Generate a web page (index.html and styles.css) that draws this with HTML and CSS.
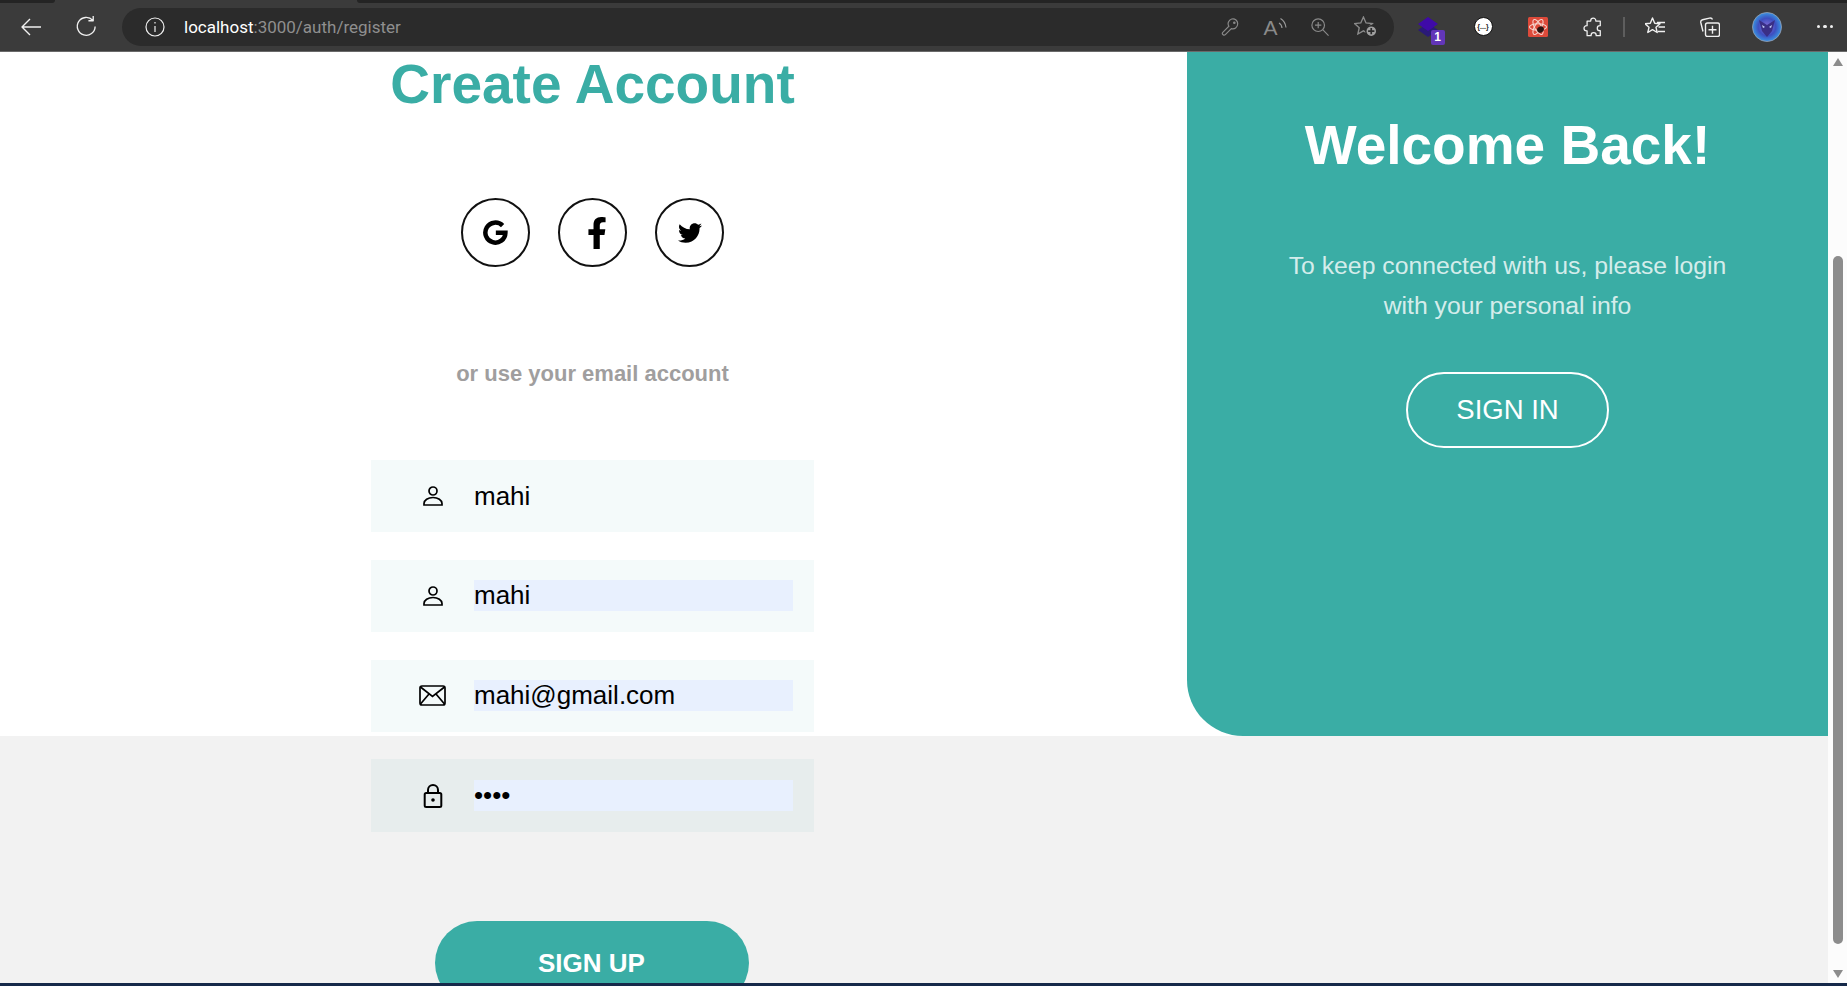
FILE: index.html
```html
<!DOCTYPE html>
<html lang="en">

<head>
  <meta charset="UTF-8">
  <meta name="viewport" content="width=device-width, initial-scale=1.0">
  <title>Register</title>
  <link rel="stylesheet" href="styles.css">
</head>

<body>
  <div class="tab-strip">
    <span class="strip-dark strip-first"></span>
    <span class="strip-tab"></span>
    <span class="strip-dark strip-rest"></span>
  </div>

  <header class="toolbar">
    <svg class="nav-icon nav-back" viewBox="0 0 24 24"><path d="M22 12H3M11 4l-8 8 8 8" /></svg>
    <svg class="nav-icon nav-reload" viewBox="0 0 24 24"><path d="M18.5 5.5A9.3 9.3 0 1 0 21 12M19 1v5h-5" /></svg>

    <div class="address">
      <svg class="info-icon" viewBox="0 0 20 20"><circle cx="10" cy="10" r="9" /><path d="M10 9v6M10 5v1.6" /></svg>
      <span class="url"><span class="url-host">localhost</span>:3000/auth/register</span>
      <div class="address-tools">
        <span class="addr-slot">
          <svg class="addr-icon" viewBox="0 0 20 20">
            <path d="M18.500 6.800a5.300 5.300 0 0 1-7 5L4.800 18.500c-.8.8-1.600.8-2.400.2l-.4-.4c-.7-.7-.7-1.600 0-2.400l6.800-6.700a5.300 5.300 0 1 1 9.700-2.400z" />
            <circle cx="14.800" cy="5.300" r=".8" />
          </svg>
        </span>
        <span class="addr-slot read-aloud">A<svg viewBox="0 0 9 14"><path d="M1 6c1.800 1 2.800 2.500 3 5M2.500 1.500c3 1.800 5 5 5.500 9" /></svg></span>
        <span class="addr-slot">
          <svg class="addr-icon addr-zoom" viewBox="0 0 20 20"><circle cx="8" cy="8" r="7" /><path d="M13 13l6.500 6.500M4.500 8h7M8 4.500v7" /></svg>
        </span>
        <span class="addr-slot">
          <svg class="addr-icon addr-fav" viewBox="0 0 22 20">
            <path d="M9 1l2.500 5.600 6 .6-4.500 4 1.300 6L9 14.200l-5.300 3 1.300-6-4.500-4 6-.6z" />
            <circle class="fav-dot" cx="16.500" cy="14.500" r="5.200" />
            <path class="fav-plus" d="M16.500 11.500v6M13.500 14.500h6" />
          </svg>
        </span>
      </div>
    </div>

    <div class="extensions">
      <div class="ext-slot">
        <svg viewBox="0 0 20 20" class="ext-diamond">
          <path fill="#2a1a78" d="M10 6l10 7-10 7-10-7z" />
          <path fill="#3f0aa8" d="M10 0l10 7-10 7-10-7z" />
        </svg>
        <span class="ext-badge">1</span>
      </div>
      <div class="ext-slot"><span class="ext-json">{...}</span></div>
      <div class="ext-slot">
        <svg class="ext-react" viewBox="0 0 20 20">
          <rect width="20" height="20" rx="1.500" fill="#dd4a3a" />
          <g fill="none" stroke="#f7d6d0" stroke-width="1.100">
            <ellipse cx="10" cy="10" rx="8.500" ry="3.300" />
            <ellipse cx="10" cy="10" rx="8.500" ry="3.300" transform="rotate(60 10 10)" />
            <ellipse cx="10" cy="10" rx="8.500" ry="3.300" transform="rotate(120 10 10)" />
          </g>
          <ellipse cx="12.500" cy="12.500" rx="3.500" ry="3" fill="#2b1512" transform="rotate(-35 12.500 12.500)" />
        </svg>
      </div>
      <div class="ext-slot">
        <svg class="nav-icon tool-puzzle" viewBox="0 0 21 22"><path d="M8 4.500V4a2.800 2.800 0 0 1 5.600 0v.5H18.500V9.500H18a2.800 2.800 0 0 0 0 5.600h.5v5.400h-4.500V20a2.800 2.800 0 0 0-5.600 0v.5H4V15.300H3.500a2.900 2.900 0 0 1 0-5.800H4V4.500z" /></svg>
      </div>
    </div>

    <span class="tool-divider"></span>

    <div class="tools">
      <span class="tool-slot">
        <svg class="nav-icon" viewBox="0 0 20 20"><path d="M7.500 1l2.200 5.200 5.300.5-4 3.600 1.200 5.200-4.700-2.800-4.700 2.800 1.200-5.200-4-3.600 5.300-.5zM12 5.500h8M13.500 10H20M13 14.500h7" /></svg>
      </span>
      <span class="tool-slot">
        <svg class="nav-icon" viewBox="0 0 20 20"><path d="M3 14.500L.8 5.500C.5 4 1 3.200 2.500 2.800l7-1.700c1.500-.3 2.500.2 3 1.500M7.500 6h10a2 2 0 0 1 2 2v9.500a2 2 0 0 1-2 2h-10a2 2 0 0 1-2-2V8a2 2 0 0 1 2-2zM12.500 8.800v8M8.500 12.800h8" /></svg>
      </span>
      <span class="tool-slot tool-slot-avatar">
        <svg class="tool-avatar" viewBox="0 0 30 30">
          <defs>
            <radialGradient id="avatarFill" cx="50%" cy="50%" r="55%">
              <stop offset="0" stop-color="#8a6ed8" />
              <stop offset=".55" stop-color="#3d4fc0" />
              <stop offset="1" stop-color="#38a4ea" />
            </radialGradient>
          </defs>
          <circle cx="15" cy="15" r="14.500" fill="url(#avatarFill)" stroke="#9aa0b0" stroke-width=".8" />
          <path d="M7 8l8 5 8-5-3 11-5 6-5-6z" fill="#3a2f86" />
          <path d="M10 13l3 2-2 1zM20 13l-3 2 2 1z" fill="#c9d6fa" />
        </svg>
      </span>
      <span class="tool-slot tool-slot-dots"><span class="tool-dots"><i></i><i></i><i></i></span></span>
    </div>
  </header>

  <main class="viewport">
    <div class="page">
      <div class="card">
        <section class="signup">
          <h1 class="signup-title">Create Account</h1>

          <div class="social">
            <a class="social-btn">
              <svg class="icon-google" viewBox="0 0 24 24"><path d="M18.300 5.900A8.900 8.900 0 1 0 20.800 12.300H12.300" /></svg>
            </a>
            <a class="social-btn">
              <svg class="icon-facebook" viewBox="0 0 320 512"><path d="M279.140 288l14.220-92.660h-88.910v-60.130c0-25.350 12.420-50.060 52.240-50.060h40.420V6.260S260.430 0 225.360 0c-73.220 0-121.080 44.380-121.080 124.720v70.620H22.890V288h81.390v224h100.170V288z" /></svg>
            </a>
            <a class="social-btn">
              <svg class="icon-twitter" viewBox="0 0 512 512"><path d="M459.370 151.716c.325 4.548.325 9.097.325 13.645 0 138.720-105.583 298.558-298.558 298.558-59.452 0-114.680-17.219-161.137-47.106 8.447.974 16.568 1.299 25.340 1.299 49.055 0 94.213-16.568 130.274-44.832-46.132-.975-84.792-31.188-98.112-72.772 6.498.974 12.995 1.624 19.818 1.624 9.421 0 18.843-1.300 27.614-3.573-48.081-9.747-84.143-51.980-84.143-102.985v-1.299c13.969 7.797 30.214 12.670 47.431 13.319-28.264-18.843-46.781-51.005-46.781-87.391 0-19.492 5.197-37.360 14.294-52.954 51.655 63.675 129.300 105.258 216.365 109.807-1.624-7.797-2.599-15.918-2.599-24.040 0-57.828 46.782-104.934 104.934-104.934 30.213 0 57.502 12.670 76.670 33.137 23.715-4.548 46.456-13.645 66.599-25.340-7.798 24.366-24.366 44.833-46.132 57.827 21.117-2.273 41.584-8.122 60.426-16.243-14.292 20.791-32.161 39.308-52.628 54.253z" /></svg>
            </a>
          </div>

          <p class="signup-hint">or use your email account</p>

          <form class="signup-form">
            <label class="field">
              <svg class="field-icon" viewBox="0 0 20 20"><circle cx="10" cy="5" r="4" /><path d="M1 19v-1.500C1 14 5 11.500 10 11.500s9 2.500 9 6V19z" /></svg>
              <input class="field-input" type="text" value="mahi">
            </label>
            <label class="field">
              <svg class="field-icon" viewBox="0 0 20 20"><circle cx="10" cy="5" r="4" /><path d="M1 19v-1.500C1 14 5 11.500 10 11.500s9 2.500 9 6V19z" /></svg>
              <input class="field-input is-filled" type="text" value="mahi">
            </label>
            <label class="field">
              <svg class="field-icon icon-mail" viewBox="0 0 27 21"><rect x="1" y="1" width="25" height="19" rx="2" /><path d="M1.500 2l12 9.500 12-9.500M1.500 19l8.500-10M25.500 19L17 9" /></svg>
              <input class="field-input is-filled" type="email" value="mahi@gmail.com">
            </label>
            <label class="field field-last">
              <svg class="field-icon icon-lock" viewBox="0 0 19 24"><rect x="1.200" y="9" width="16.600" height="14" rx="1.500" /><path d="M4.500 9V6a5 5 0 0 1 10 0v3" /><circle class="lock-dot" cx="9.500" cy="16" r="1.800" /></svg>
              <input class="field-input is-filled" type="password" value="mahi">
            </label>
            <button class="btn-signup" type="button">SIGN UP</button>
          </form>
        </section>

        <aside class="welcome">
          <h2 class="welcome-title">Welcome Back!</h2>
          <p class="welcome-text">To keep connected with us, please login with your personal info</p>
          <button class="btn-signin" type="button">SIGN IN</button>
        </aside>
      </div>
    </div>

    <div class="scrollbar">
      <span class="arrow-up"></span>
      <span class="thumb"></span>
      <span class="arrow-down"></span>
    </div>
  </main>

  <div class="taskbar-edge"></div>
</body>

</html>
```

FILE: styles.css
```css
* {
  box-sizing: border-box;
}

html,
body {
  height: 100%;
  margin: 0;
  overflow: hidden;
}

body {
  font-family: 'Liberation Sans', Arial, sans-serif;
  background-color: #f2f2f2;
  display: flex;
  flex-direction: column;
}

/* browser chrome */
.tab-strip {
  display: flex;
  height: 3px;
  background-color: #3b3b3b;
}

.strip-dark {
  background-color: #242424;
}

.strip-first {
  width: 55px;
  border-bottom-right-radius: 3px;
}

.strip-tab {
  width: 302px;
}

.strip-rest {
  flex: 1;
  border-bottom-left-radius: 3px;
}

.toolbar {
  display: flex;
  align-items: center;
  height: 49px;
  padding-bottom: 1px;
  background-color: #3b3b3b;
  border-bottom: 1px solid #6a6a6a;
}

.nav-icon {
  fill: none;
  stroke: #f0f0f0;
  stroke-width: 1.400;
  stroke-linejoin: round;
  width: 20px;
  height: 20px;
  flex: none;
}

.nav-back {
  width: 24px;
  height: 24px;
  margin-left: 19px;
}

.nav-reload {
  margin-left: 32px;
  width: 23px;
  height: 23px;
}

.address {
  display: flex;
  align-items: center;
  flex: none;
  width: 1272px;
  height: 38px;
  margin-left: 24px;
  padding: 0 6.500px 0 23px;
  border-radius: 19px;
  background-color: #2b2b2b;
}

.info-icon {
  width: 20px;
  height: 20px;
  fill: none;
  stroke: #f0f0f0;
  stroke-width: 1.200;
}

.url {
  margin-left: 19px;
  font-family: Roboto, sans-serif;
  font-size: 17px;
  color: #8f8f8f;
  flex: 1;
}

.url-host {
  color: #fff;
}

.address-tools {
  display: flex;
  align-items: center;
}

.addr-slot {
  display: flex;
  align-items: center;
  justify-content: center;
  width: 45px;
}

.addr-icon {
  width: 18px;
  height: 18px;
  fill: none;
  stroke: #8a8a8a;
  stroke-width: 1.300;
}

.addr-fav {
  width: 23px;
  height: 21px;
}

.fav-dot {
  fill: #a0a0a0;
  stroke: #2b2b2b;
}

.fav-plus {
  stroke: #2b2b2b;
  stroke-width: 1.600;
}

.read-aloud {
  align-items: flex-start;
  height: 20px;
  font-size: 21px;
  line-height: 22px;
  color: #8a8a8a;
}

.read-aloud svg {
  width: 9px;
  height: 14px;
  flex: none;
  fill: none;
  stroke: #9a9a9a;
  stroke-width: 1.200;
}

.extensions {
  display: flex;
  flex: none;
  margin-left: 6.500px;
}

.ext-slot {
  position: relative;
  display: flex;
  align-items: center;
  justify-content: center;
  width: 55px;
  height: 40px;
}

.ext-diamond {
  width: 20px;
  height: 20px;
}

.ext-badge {
  position: absolute;
  left: 30px;
  top: 23px;
  width: 14px;
  height: 15px;
  border-radius: 2px;
  background-color: #6236b8;
  color: #fff;
  font-size: 12px;
  font-weight: bold;
  line-height: 15px;
  text-align: center;
}

.ext-json {
  width: 19px;
  height: 19px;
  border-radius: 50%;
  background-color: #fff;
  border: 1px solid #111;
  color: #222;
  font-size: 7px;
  font-weight: bold;
  line-height: 17px;
  text-align: center;
}

.ext-react {
  width: 20px;
  height: 20px;
}

.tool-divider {
  width: 2px;
  height: 20px;
  margin-left: 2px;
  flex: none;
  background-color: #5e5e5e;
}

.tools {
  display: flex;
  align-items: center;
  margin-left: 3px;
}

.tool-slot {
  display: flex;
  align-items: center;
  justify-content: center;
  width: 55px;
}

.tool-slot-avatar {
  width: 59px;
}

.tool-slot-dots {
  width: 57px;
}

.tool-avatar {
  width: 30px;
  height: 30px;
}

.tool-dots {
  display: flex;
  gap: 3px;
}

.tool-dots i {
  width: 3.500px;
  height: 3.500px;
  border-radius: 50%;
  background-color: #f0f0f0;
}

/* page */
.viewport {
  flex: 1;
  display: flex;
  overflow: hidden;
  min-height: 0;
}

.page {
  flex: 1;
  min-width: 0;
}

.card {
  display: grid;
  grid-template-columns: 1187px 641px;
  grid-template-rows: 684px;
  background-color: #fff;
}

.signup {
  display: flex;
  flex-direction: column;
  align-items: center;
  padding-right: 2px;
}

.signup-title {
  margin: 0;
  font-size: 55px;
  line-height: 64px;
  color: #3aada5;
}

.social {
  display: flex;
  gap: 28px;
  margin: 82px 1px 0 0;
}

.social-btn {
  display: flex;
  align-items: center;
  justify-content: center;
  width: 69px;
  height: 69px;
  border: 2px solid #111;
  border-radius: 50%;
}

.icon-google {
  width: 27px;
  height: 27px;
  fill: none;
  stroke: #000;
  stroke-width: 4;
}

.icon-facebook {
  width: 20px;
  height: 32px;
  margin-left: 9px;
}

.icon-twitter {
  width: 24px;
  height: 24px;
  margin-left: 2px;
}

.signup-hint {
  margin: 94px 0 0;
  font-size: 22px;
  font-weight: bold;
  line-height: 26px;
  color: #a09e9e;
}

.signup-form {
  display: flex;
  flex-direction: column;
  align-items: center;
  gap: 27.8px;
  width: 443px;
  margin-top: 73px;
}

.field {
  display: flex;
  align-items: center;
  width: 100%;
  height: 72px;
  flex: none;
  padding-right: 21px;
  background-color: rgba(58, 173, 165, 0.055);
}

.field-last {
  height: 73px;
}

.field-icon {
  width: 20px;
  height: 20px;
  margin: 0 31.500px 0 51.500px;
  flex: none;
  fill: none;
  stroke: #000;
  stroke-width: 1.700;
}

.icon-mail {
  width: 27px;
  height: 21px;
  margin: 0 28px 0 48px;
}

.icon-lock {
  height: 24px;
  stroke-width: 2;
}

.lock-dot {
  fill: #000;
  stroke: none;
}

.field-input {
  flex: 1;
  min-width: 0;
  height: 31px;
  padding: 0;
  border: none;
  outline: none;
  background: transparent;
  color: #000;
  font-family: 'Liberation Sans', Arial, sans-serif;
  font-size: 26px;
}

.field-input.is-filled {
  background-color: #e8f0fe;
}

.btn-signup {
  flex: none;
  width: 314px;
  height: 84px;
  margin: 61px 2px 0 0;
  border: none;
  border-radius: 42px;
  background-color: #3aada5;
  color: #fff;
  font-family: 'Liberation Sans', Arial, sans-serif;
  font-size: 26px;
  font-weight: bold;
}

.welcome {
  display: flex;
  flex-direction: column;
  align-items: center;
  padding-top: 61px;
  border-bottom-left-radius: 56px;
  background-color: #3aada5;
  color: #fff;
  text-align: center;
}

.welcome-title {
  margin: 0;
  font-size: 55px;
  line-height: 64px;
}

.welcome-text {
  max-width: 470px;
  margin: 69px 0 0;
  font-size: 24.750px;
  line-height: 40px;
  color: rgba(255, 255, 255, 0.8);
}

.btn-signin {
  width: 203px;
  height: 76px;
  margin-top: 46px;
  border: 2px solid #fff;
  border-radius: 38px;
  background: transparent;
  color: #fff;
  font-family: 'Liberation Sans', Arial, sans-serif;
  font-size: 27.500px;
}

/* scrollbar */
.scrollbar {
  display: flex;
  flex-direction: column;
  align-items: center;
  flex: none;
  width: 19px;
  padding-top: 6px;
  background-color: #fcfcfc;
}

.arrow-up,
.arrow-down {
  width: 0;
  height: 0;
  border-left: 5px solid transparent;
  border-right: 5px solid transparent;
}

.arrow-up {
  border-bottom: 8px solid #8c8c8c;
}

.arrow-down {
  margin-top: 26px;
  border-top: 8px solid #8c8c8c;
}

.thumb {
  width: 10px;
  height: 688px;
  margin-top: 190px;
  border-radius: 5px;
  background-color: #8c8c8c;
}

.taskbar-edge {
  height: 3px;
  background-color: #16294a;
}
```
